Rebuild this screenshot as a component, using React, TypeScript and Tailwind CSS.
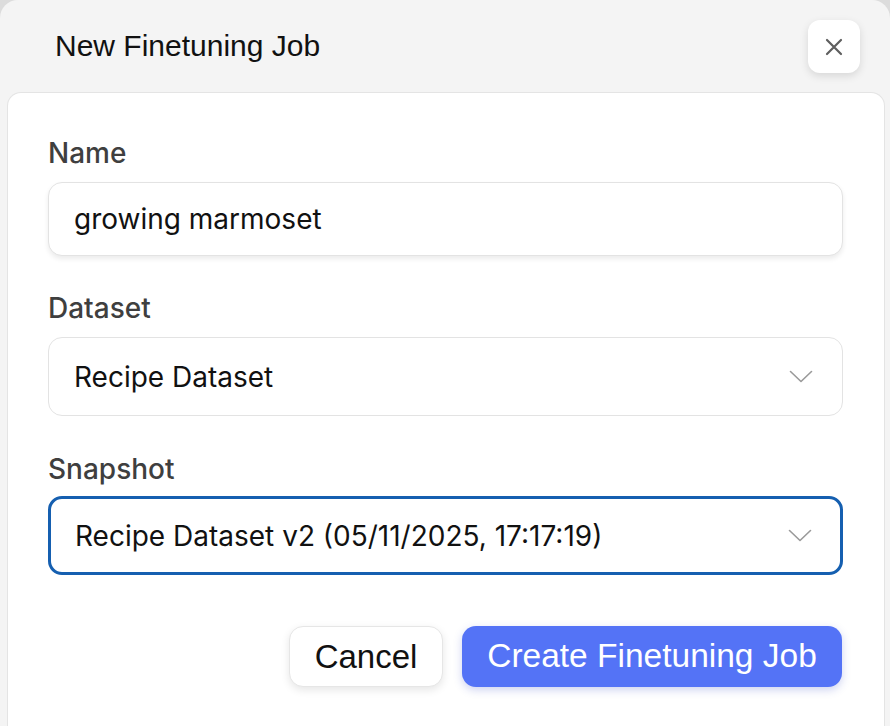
import React from "react";

const inter = { fontFamily: "Inter, 'Noto Sans', sans-serif" };

function Chevron() {
  return (
    <svg width="24" height="13" viewBox="0 0 24 13" fill="none" className="shrink-0">
      <path d="M1.5 1.5 L12 11.5 L22.5 1.5" stroke="#9a9a9a" strokeWidth="1.6" strokeLinecap="round" strokeLinejoin="round" />
    </svg>
  );
}

export default function App() {
  return (
    <div className="h-[726px] w-[890px] overflow-hidden bg-[#dcdcdc]">
      <div className="flex h-full flex-col rounded-t-[18px] bg-[#f4f4f4]">
        {/* header */}
        <div className="flex h-[92px] items-start justify-between pl-[55px] pr-[30px]">
          <h1
            className="mt-[30px] text-[30px] leading-[32px] font-normal text-[#111]"
            style={{ fontFamily: "'Liberation Sans', Arial, sans-serif" }}
          >
            New Finetuning Job
          </h1>
          <button className="mt-[20px] flex h-[53px] w-[52px] items-center justify-center rounded-[12px] bg-white shadow-[0_3px_8px_rgba(0,0,0,0.12)]">
            <svg width="18" height="18" viewBox="0 0 18 18" fill="none">
              <path d="M2 2 L16 16 M16 2 L2 16" stroke="#5f5f5f" strokeWidth="2.2" strokeLinecap="round" />
            </svg>
          </button>
        </div>

        {/* card */}
        <div className="ml-[7px] mr-[5px] flex-1 rounded-t-[14px] border-[1.5px] border-b-0 border-[#e4e4e4] bg-white pl-[40px] pr-[41px] pt-[46px]" style={inter}>
          <label className="block h-[28px] text-[28px] leading-[28px] font-medium text-[#3f3f3f]">Name</label>
          <div className="mt-[15px] flex h-[74px] items-center rounded-[14px] border-[1.5px] border-[#e3e3e3] bg-white pl-[25px] shadow-[0_3px_5px_rgba(0,0,0,0.08)]">
            <span className="text-[28px] leading-[28px] text-[#111]">growing marmoset</span>
          </div>

          <label className="mt-[38px] block h-[28px] text-[28px] leading-[28px] font-medium text-[#3f3f3f]">Dataset</label>
          <div className="mt-[15px] flex h-[79px] items-center justify-between rounded-[14px] border-[1.5px] border-[#e3e3e3] bg-white pl-[25px] pr-[29px]">
            <span className="text-[28px] leading-[28px] text-[#111]">Recipe Dataset</span>
            <Chevron />
          </div>

          <label className="mt-[39px] block h-[28px] text-[28px] leading-[28px] font-medium text-[#3f3f3f]">Snapshot</label>
          <div className="mt-[13px] flex h-[79px] items-center justify-between rounded-[14px] border-[3px] border-[#155fb0] bg-white pl-[24px] pr-[28px]">
            <span className="text-[28px] leading-[28px] text-[#111]">Recipe Dataset v2 (05/11/2025, 17:17:19)</span>
            <Chevron />
          </div>

          <div
            className="mt-[51px] flex justify-end gap-[19px] pr-[1px]"
            style={{ fontFamily: "'Liberation Sans', Arial, sans-serif" }}
          >
            <button className="flex h-[61px] w-[154px] items-center justify-center rounded-[14px] border-[1.5px] border-[#e6e6e6] bg-white text-[33px] text-[#111] shadow-[0_3px_8px_rgba(0,0,0,0.1)]">
              Cancel
            </button>
            <button className="flex h-[61px] w-[380px] items-center justify-center rounded-[14px] bg-[#5473f6] text-[33.5px] text-white shadow-[0_3px_8px_rgba(60,80,200,0.25)]">
              Create Finetuning Job
            </button>
          </div>
        </div>
      </div>
    </div>
  );
}
